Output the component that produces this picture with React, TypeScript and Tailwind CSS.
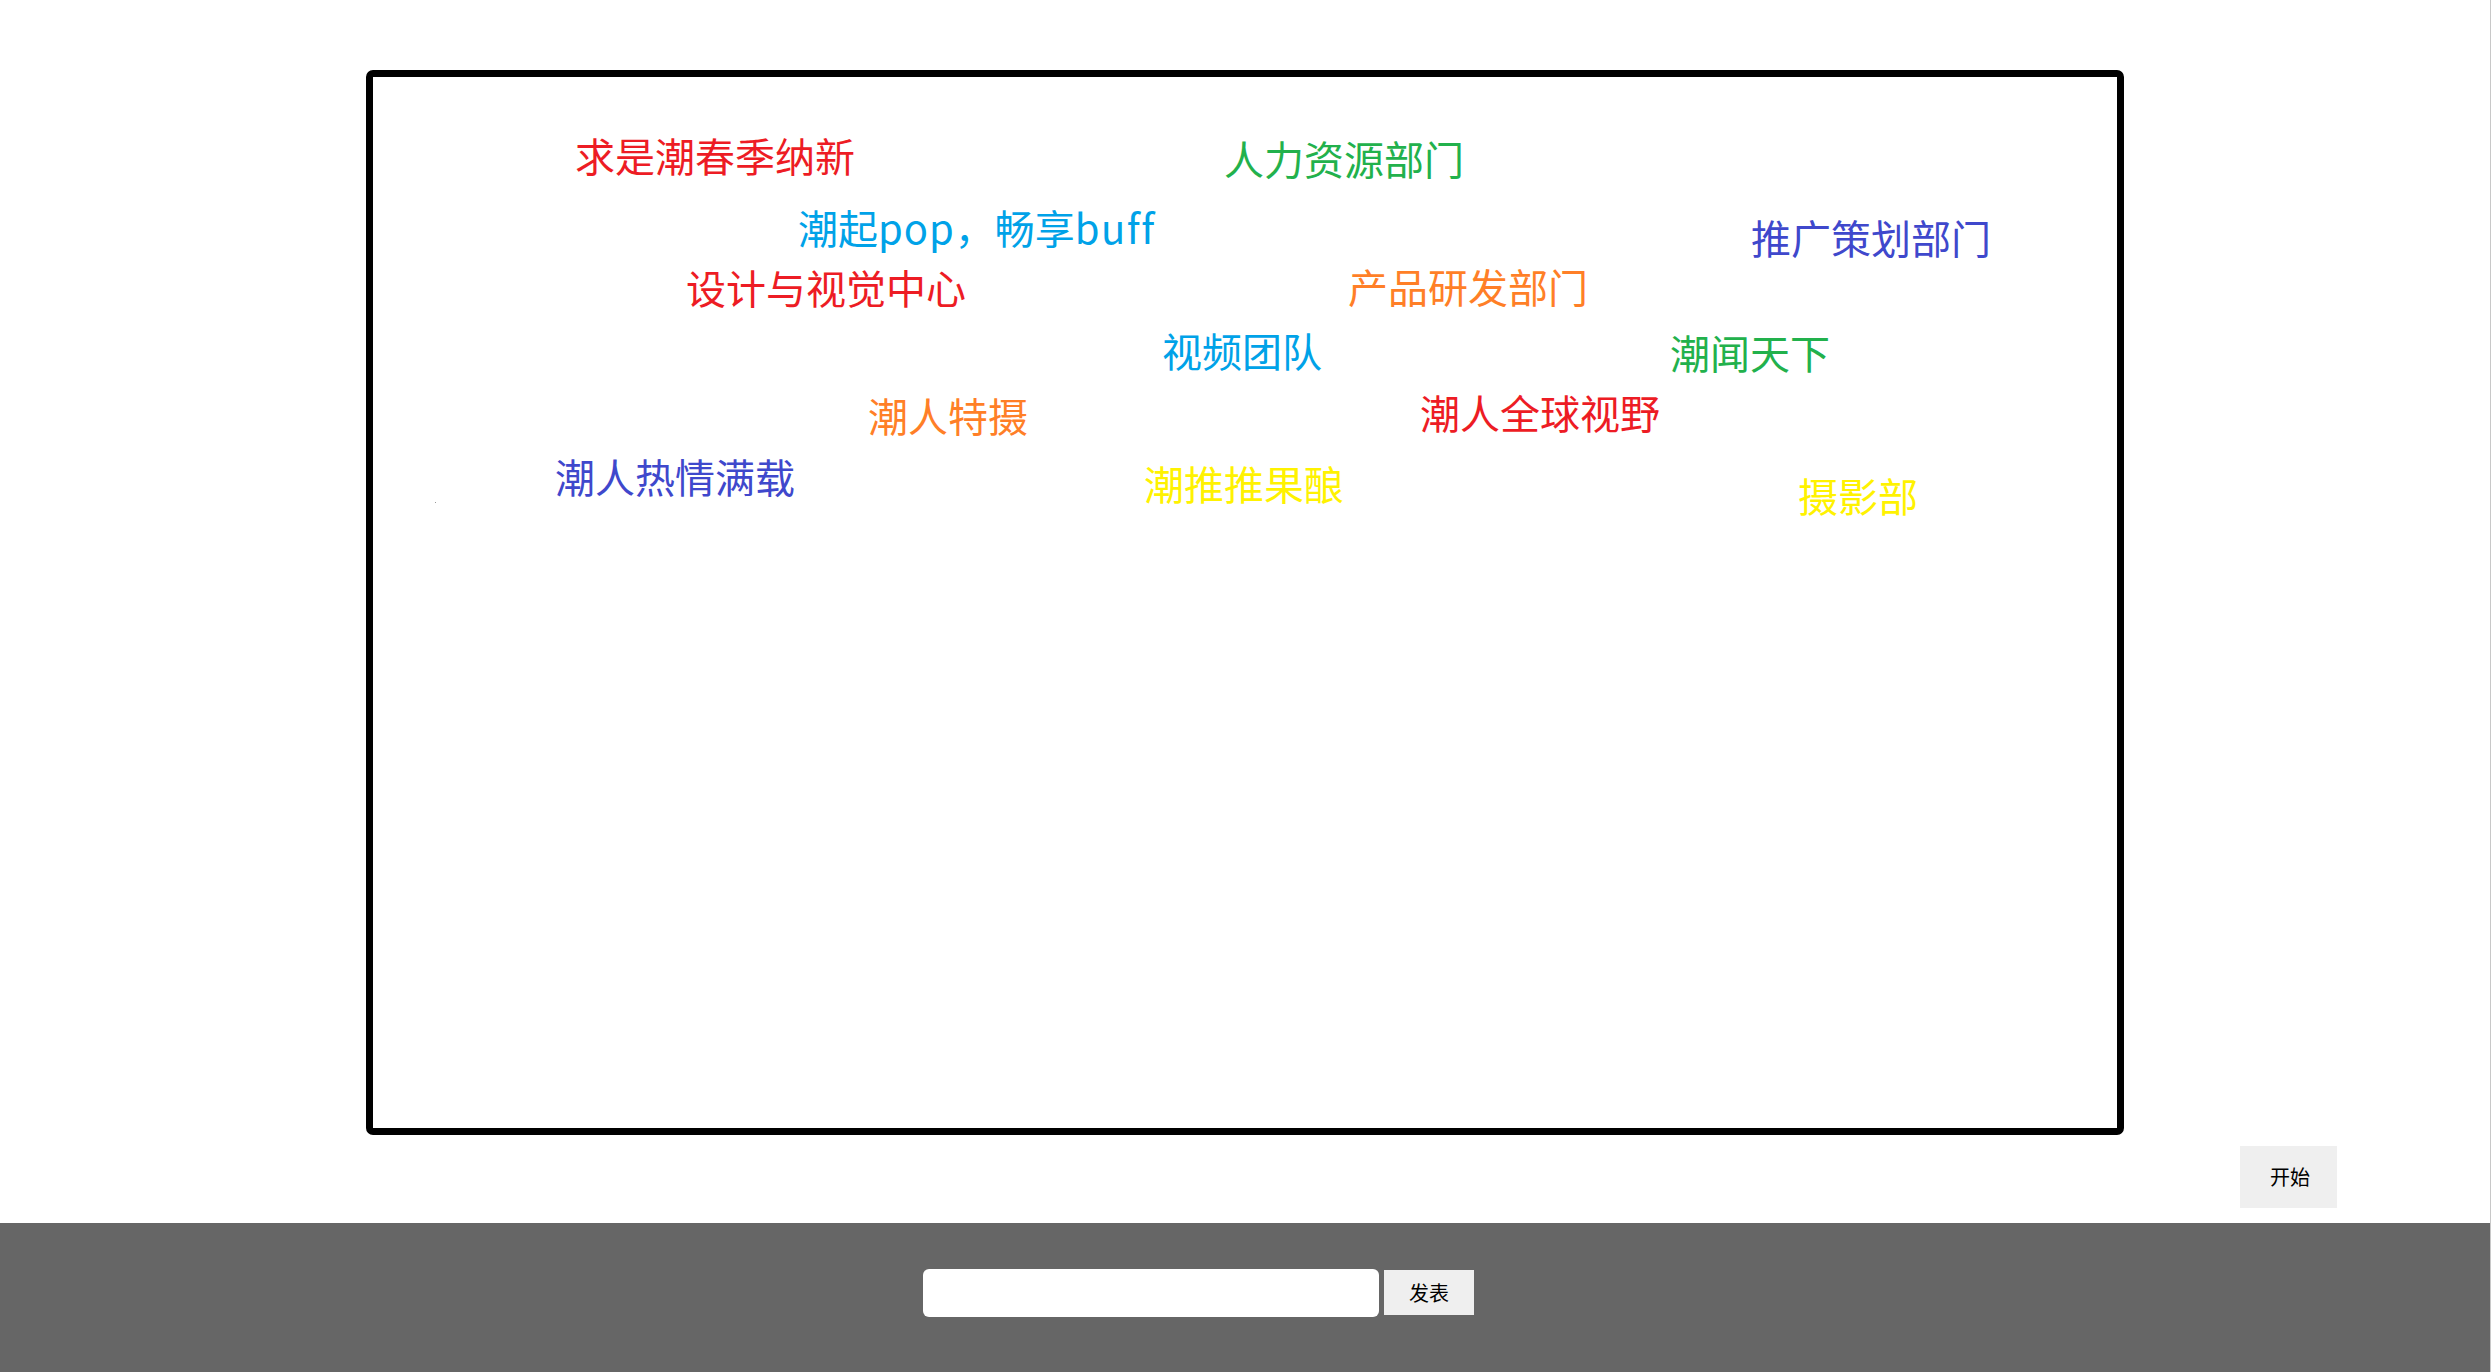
const cjk = "font-['Microsoft_YaHei','Noto_Sans_CJK_SC',sans-serif]";

const barrage = [
  { text: "求是潮春季纳新", cls: "left-[202px] top-[58px] text-[#ed1c24]" },
  { text: "人力资源部门", cls: "left-[851px] top-[61px] text-[#22b14c]" },
  { text: "推广策划部门", cls: "left-[1378px] top-[140px] text-[#3f48cc]" },
  { text: "设计与视觉中心", cls: "left-[313px] top-[190px] text-[#ed1c24]" },
  { text: "产品研发部门", cls: "left-[975px] top-[189px] text-[#ff7f27]" },
  { text: "视频团队", cls: "left-[789px] top-[253px] text-[#00a2e8]" },
  { text: "潮闻天下", cls: "left-[1297px] top-[255px] text-[#22b14c]" },
  { text: "潮人特摄", cls: "left-[495px] top-[318px] text-[#ff7f27]" },
  { text: "潮人全球视野", cls: "left-[1047px] top-[315px] text-[#ed1c24]" },
  { text: "潮人热情满载", cls: "left-[182px] top-[379px] text-[#3f48cc]" },
  { text: "潮推推果酿", cls: "left-[771px] top-[386px] text-[#fff200]" },
  { text: "摄影部", cls: "left-[1425px] top-[398px] text-[#fff200]" },
];

export default function App() {
  return (
    <div className={`flex h-screen w-full flex-col border-r border-[#c8c8c8] bg-white ${cjk}`}>
      <div className="flex flex-1 flex-col pt-[70px]">
        {/* danmaku stage */}
        <div className="relative mx-auto h-[1065px] w-[1758px] overflow-hidden rounded-[7px] border-[7px] border-black bg-white">
          {barrage.map((item) => (
            <span
              key={item.text}
              className={`absolute whitespace-nowrap text-[40px] leading-none ${item.cls}`}
            >
              {item.text}
            </span>
          ))}
          <span className="absolute left-[425px] top-[130px] whitespace-nowrap text-[40px] leading-none text-[#00a2e8]">
            潮起<span className="tracking-[1px]">pop</span>，畅享
            <span className="tracking-[1.5px]">buff</span>
          </span>
          <span className="absolute left-[62px] top-[425px] h-px w-px bg-[#9a9a9a]" />
        </div>
        <div className="mt-[11px] flex justify-end pr-[153px]">
          <button
            type="button"
            className="h-[62px] w-[97px] bg-[#efefef] pl-[3px] text-[20px] text-black"
          >
            开始
          </button>
        </div>
      </div>

      <div className="flex h-[149px] items-center bg-[#666666] pl-[923px] pb-[10px]">
        <input
          type="text"
          className="h-[48px] w-[456px] rounded-[6px] bg-white px-3 text-[20px] outline-none"
        />
        <button
          type="button"
          className="ml-[5px] h-[45px] w-[90px] bg-[#efefef] text-[20px] text-black"
        >
          发表
        </button>
      </div>
    </div>
  );
}
